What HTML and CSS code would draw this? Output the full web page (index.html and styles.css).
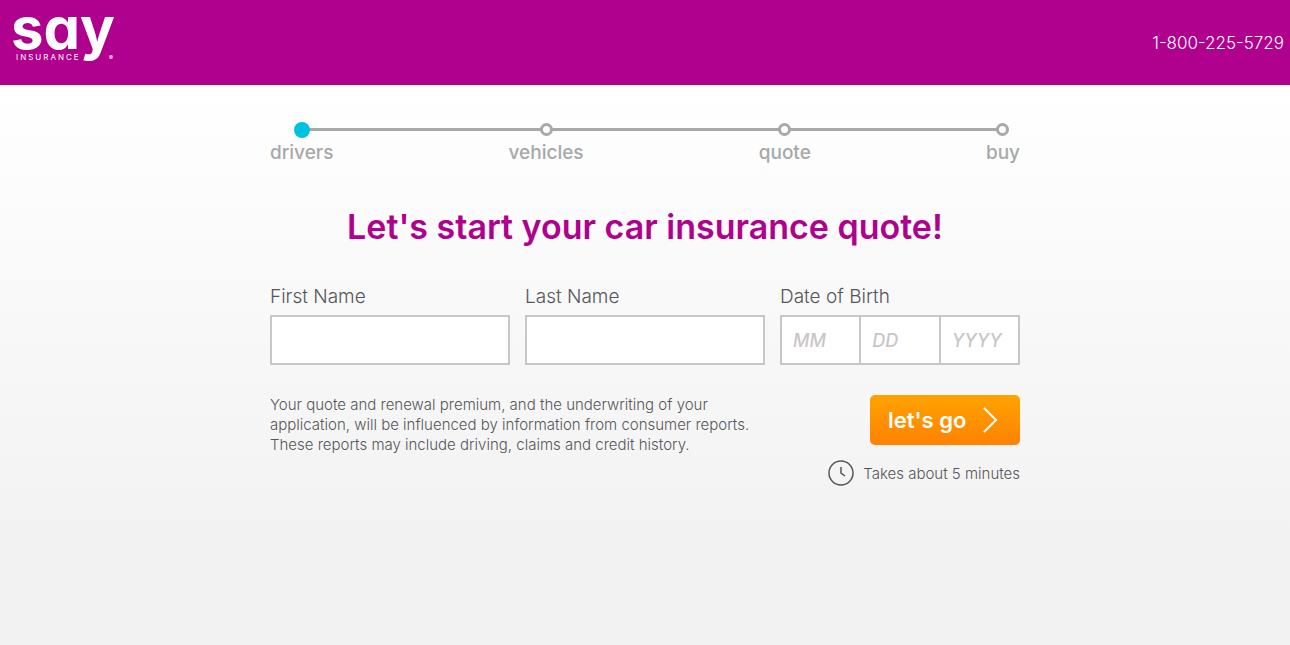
FILE: index.html
```
<!DOCTYPE html>
<html lang="en">
<head>
<meta charset="utf-8">
<meta name="viewport" content="width=device-width, initial-scale=1">
<title>Say Insurance</title>
<link rel="stylesheet" href="styles.css">
</head>
<body>
<header class="header">
  <a class="logo" href="#" aria-label="say insurance">
    <svg width="110" height="70" viewBox="0 0 110 70" aria-hidden="true">
      <text class="logo-name" x="-1" y="49">say</text>
      <text class="logo-sub" x="4" y="60">INSURANCE</text>
      <text class="logo-mark" x="97" y="60">®</text>
    </svg>
  </a>
  <a class="phone" href="tel:18002255729">1-800-225-5729</a>
</header>
<main class="main">
  <ol class="steps">
    <li class="step current" aria-current="step"><span class="dot"></span>drivers</li>
    <li class="step"><span class="dot"></span>vehicles</li>
    <li class="step"><span class="dot"></span>quote</li>
    <li class="step"><span class="dot"></span>buy</li>
  </ol>
  <h1 class="title">Let's start your car insurance quote!</h1>
  <form>
    <div class="fields">
      <div class="field">
        <label class="label" for="first">First Name</label>
        <input class="input" id="first" type="text">
      </div>
      <div class="field">
        <label class="label" for="last">Last Name</label>
        <input class="input" id="last" type="text">
      </div>
      <div class="field">
        <label class="label" for="month">Date of Birth</label>
        <div class="date">
          <input class="input" id="month" type="text" placeholder="MM" aria-label="Birth month">
          <input class="input" type="text" placeholder="DD" aria-label="Birth day">
          <input class="input" type="text" placeholder="YYYY" aria-label="Birth year">
        </div>
      </div>
    </div>
    <div class="footer">
      <p class="notice">Your quote and renewal premium, and the underwriting of your<br>application, will be influenced by information from consumer reports.<br>These reports may include driving, claims and credit history.</p>
      <div class="actions">
        <button class="go" type="button">let's go
          <svg width="16" height="26" viewBox="0 0 16 26" fill="none" stroke="#fff" stroke-width="2" aria-hidden="true"><path d="M2 1l12 12L2 25"/></svg>
        </button>
        <p class="time">
          <svg width="26" height="26" viewBox="0 0 26 26" fill="none" stroke="#55565a" stroke-width="1.5" aria-hidden="true"><circle cx="13" cy="13" r="12"/><path d="M13 7v6l4 3"/></svg>
          Takes about 5 minutes
        </p>
      </div>
    </div>
  </form>
</main>
</body>
</html>
```
FILE: styles.css
```
* { box-sizing: border-box; }
body {
  margin: 0;
  min-height: 100vh;
  font-family: Inter, "Open Sans", sans-serif;
  color: #55565a;
  background: linear-gradient(#fff 85px, #f2f2f2 540px);
}
.header {
  display: flex;
  align-items: center;
  justify-content: space-between;
  height: 85px;
  padding: 0 6px 0 12px;
  background: #b0008e;
}
.logo { align-self: flex-start; }
.logo svg { display: block; fill: #fff; overflow: visible; }
.logo-name { font-size: 58px; font-weight: 700; font-feature-settings: "cv11"; }
.logo-sub { font-size: 8px; font-weight: 400; letter-spacing: 2px; }
.logo-mark { font-size: 6px; }
.phone {
  color: #fff;
  font-size: 17px;
  font-weight: 300;
  text-decoration: none;
}
.main { max-width: 750px; margin: 0 auto; padding-top: 37px; }
.steps {
  position: relative;
  display: flex;
  justify-content: space-between;
  margin: 0;
  padding: 0;
  list-style: none;
}
.steps::before {
  content: "";
  position: absolute;
  top: 6px;
  left: 31px;
  right: 17px;
  height: 3px;
  background: #a7a8aa;
}
.step {
  position: relative;
  display: flex;
  flex-direction: column;
  align-items: center;
  gap: 2px;
  color: #a7a8aa;
  font-size: 19px;
  font-weight: 500;
  line-height: 26px;
}
.dot {
  width: 13px;
  height: 13px;
  margin: 1px 0 2px;
  border: 3px solid #a7a8aa;
  border-radius: 50%;
  background: #fff;
}
.current .dot {
  width: 16px;
  height: 16px;
  margin: 0;
  border: 0;
  background: #00c1de;
}
.title {
  margin: 36px 0 0;
  color: #b0008e;
  font-size: 34px;
  font-weight: 600;
  line-height: 50px;
  text-align: center;
}
.fields {
  display: grid;
  grid-template-columns: repeat(3, 1fr);
  gap: 15px;
  margin-top: 32px;
}
.label {
  display: block;
  margin-bottom: 5px;
  font-size: 19px;
  font-weight: 300;
  line-height: 26px;
}
.input {
  display: block;
  width: 100%;
  height: 50px;
  padding: 0 11px;
  border: 2px solid #cac6c7;
  border-radius: 0;
  background: #fff;
  font: 500 18px Inter, "Open Sans", sans-serif;
}
.input::placeholder { color: #cac6c7; font-style: italic; opacity: 1; }
.date { display: flex; }
.date .input { flex: 1; min-width: 0; }
.date .input + .input { border-left: 0; }
.footer {
  display: flex;
  justify-content: space-between;
  margin-top: 30px;
}
.notice { margin: 0; font-size: 15px; font-weight: 300; line-height: 20px; }
.actions { display: flex; flex-direction: column; align-items: flex-end; }
.go {
  display: flex;
  align-items: center;
  justify-content: space-between;
  width: 150px;
  height: 50px;
  padding: 0 22px 0 18px;
  border: 0;
  border-radius: 5px;
  background: linear-gradient(#ffa300, #ff8200);
  color: #fff;
  font: 600 22px Inter, "Open Sans", sans-serif;
}
.time {
  display: flex;
  align-items: center;
  gap: 9px;
  margin: 15px 0 0;
  font-size: 15px;
  font-weight: 300;
}
```
